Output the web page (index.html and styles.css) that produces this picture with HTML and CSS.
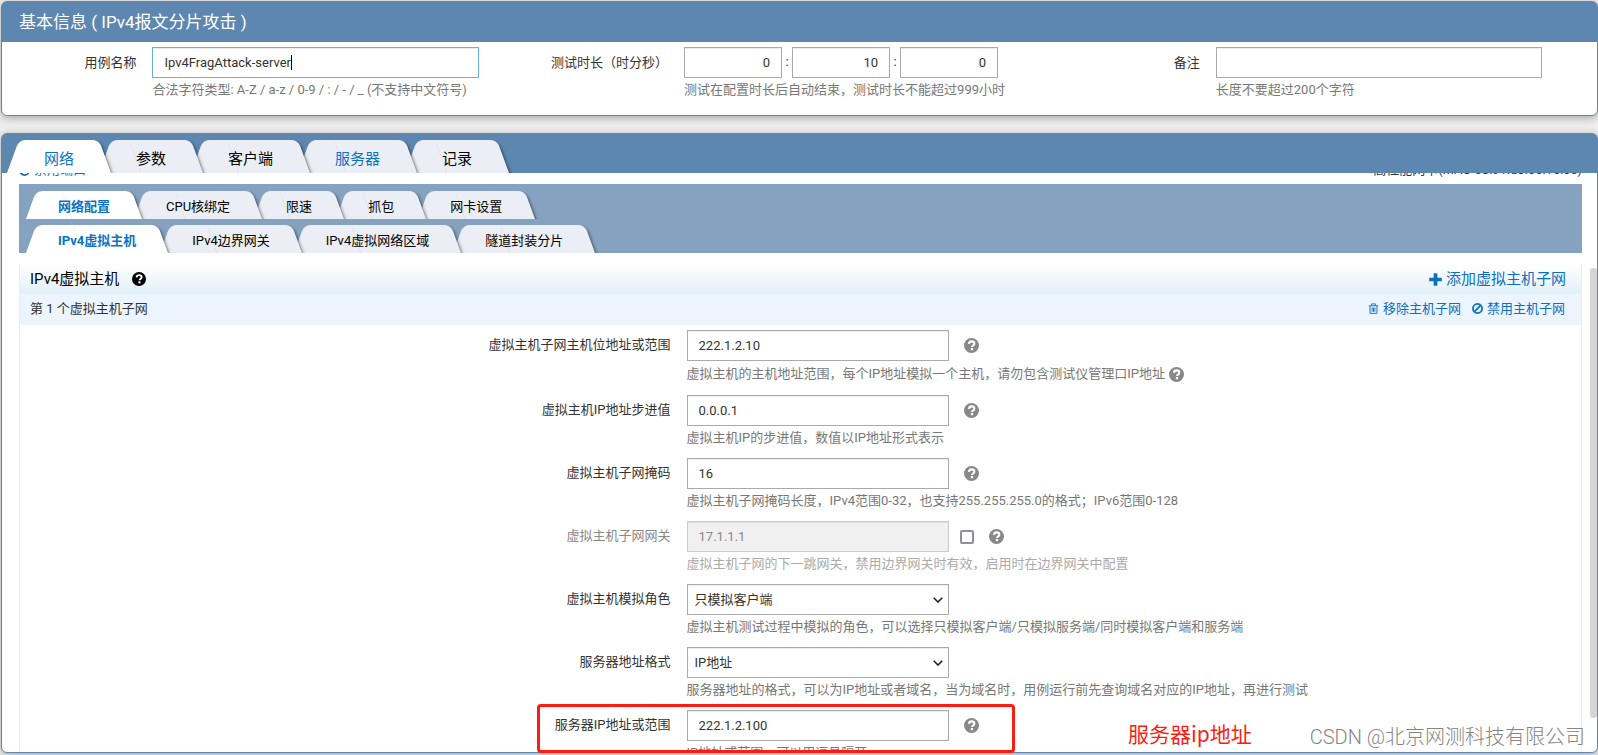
FILE: index.html
```html
<!DOCTYPE html>
<html lang="zh-CN">
<head>
<meta charset="utf-8">
<title>IPv4报文分片攻击</title>
<link rel="stylesheet" href="styles.css">
</head>
<body>
<svg class="defs" aria-hidden="true">
  <symbol id="i-help" viewBox="0 0 16 16"><circle cx="8" cy="8" r="8" fill="currentColor"/><path d="M5.2 6.2C5.4 4.5 6.500 3.600 8.100 3.600c1.700 0 2.900 1 2.900 2.400 0 1.900-2.400 2-2.400 3.500" fill="none" stroke="#fff" stroke-width="2.200"/><rect x="7.300" y="10.600" width="2.400" height="2.400" fill="#fff"/></symbol>
  <symbol id="i-plus" viewBox="0 0 12 12"><path d="M4.300 .2h3.400v4.100h4.100v3.400h-4.100v4.100h-3.400v-4.100h-4.100v-3.400h4.100z" fill="currentColor"/></symbol>
  <symbol id="i-trash" viewBox="0 0 12 12"><path d="M1 3h10M4 3V1h4v2M2.200 3v8.300h7.600V3M4.500 5v4.500M6 5v4.500M7.500 5v4.500" fill="none" stroke="currentColor"/></symbol>
  <symbol id="i-ban" viewBox="0 0 12 12"><circle cx="6" cy="6" r="5" fill="none" stroke="currentColor" stroke-width="1.900"/><path d="M9.300 2.700L2.700 9.300" stroke="currentColor" stroke-width="1.900"/></symbol>
</svg>

<section class="card">
  <h1 class="card-title">基本信息 ( IPv4报文分片攻击 )</h1>
  <form class="basic">
    <div class="field">
      <label class="field-label" for="name">用例名称</label>
      <div class="field-main">
        <span class="name-wrap"><input id="name" class="input focused" type="text" value="Ipv4FragAttack-server"><i class="caret"></i></span>
        <p class="hint">合法字符类型: A-Z / a-z / 0-9 / : / - / _ (不支持中文符号)</p>
      </div>
    </div>
    <div class="field">
      <label class="field-label" for="hours">测试时长（时分秒）</label>
      <div class="field-main">
        <div class="duration">
          <input id="hours" class="input num" type="text" value="0"><span>:</span>
          <input class="input num" type="text" value="10" aria-label="分"><span>:</span>
          <input class="input num" type="text" value="0" aria-label="秒">
        </div>
        <p class="hint">测试在配置时长后自动结束，测试时长不能超过999小时</p>
      </div>
    </div>
    <div class="field">
      <label class="field-label" for="remark">备注</label>
      <div class="field-main">
        <input id="remark" class="input" type="text">
        <p class="hint">长度不要超过200个字符</p>
      </div>
    </div>
  </form>
</section>

<section class="card card-main">
  <nav class="tabs tabs-top">
    <button class="tab active">网络</button>
    <button class="tab">参数</button>
    <button class="tab">客户端</button>
    <button class="tab linked">服务器</button>
    <button class="tab">记录</button>
  </nav>
  <div class="scroll">
    <div class="port-line">
      <a class="link" href="#"><svg class="icon icon-s"><use href="#i-ban"/></svg>禁用端口</a>
      <span>高性能网卡(MAC-68:91:d0:66:16:c6)</span>
    </div>
    <div class="subtabs">
      <nav class="tabs tabs-sub">
        <button class="tab active">网络配置</button>
        <button class="tab">CPU核绑定</button>
        <button class="tab">限速</button>
        <button class="tab">抓包</button>
        <button class="tab">网卡设置</button>
      </nav>
      <nav class="tabs tabs-sub">
        <button class="tab active">IPv4虚拟主机</button>
        <button class="tab">IPv4边界网关</button>
        <button class="tab">IPv4虚拟网络区域</button>
        <button class="tab">隧道封装分片</button>
      </nav>
    </div>

    <section class="hosts">
      <header class="hosts-head">
        <h2>IPv4虚拟主机</h2>
        <svg class="icon icon-h"><use href="#i-help"/></svg>
        <a class="link push" href="#"><svg class="icon icon-p"><use href="#i-plus"/></svg>添加虚拟主机子网</a>
      </header>
      <div class="subnet-bar">
        <span>第 1 个虚拟主机子网</span>
        <a class="link push" href="#"><svg class="icon icon-s"><use href="#i-trash"/></svg>移除主机子网</a>
        <a class="link" href="#"><svg class="icon icon-s"><use href="#i-ban"/></svg>禁用主机子网</a>
      </div>
      <form class="rows">
        <div class="row">
          <label class="row-label" for="f1">虚拟主机子网主机位地址或范围</label>
          <div class="row-main">
            <div class="control"><input id="f1" class="input" type="text" value="222.1.2.10"><svg class="icon icon-q"><use href="#i-help"/></svg></div>
            <p class="hint tall">虚拟主机的主机地址范围，每个IP地址模拟一个主机，请勿包含测试仪管理口IP地址<svg class="icon icon-q"><use href="#i-help"/></svg></p>
          </div>
        </div>
        <div class="row">
          <label class="row-label" for="f2">虚拟主机IP地址步进值</label>
          <div class="row-main">
            <div class="control"><input id="f2" class="input" type="text" value="0.0.0.1"><svg class="icon icon-q"><use href="#i-help"/></svg></div>
            <p class="hint">虚拟主机IP的步进值，数值以IP地址形式表示</p>
          </div>
        </div>
        <div class="row">
          <label class="row-label" for="f3">虚拟主机子网掩码</label>
          <div class="row-main">
            <div class="control"><input id="f3" class="input" type="text" value="16"><svg class="icon icon-q"><use href="#i-help"/></svg></div>
            <p class="hint">虚拟主机子网掩码长度，IPv4范围0-32，也支持255.255.255.0的格式；IPv6范围0-128</p>
          </div>
        </div>
        <div class="row disabled">
          <label class="row-label" for="f4">虚拟主机子网网关</label>
          <div class="row-main">
            <div class="control"><input id="f4" class="input" type="text" value="17.1.1.1" disabled><input class="check" type="checkbox" aria-label="启用虚拟主机子网网关"><svg class="icon icon-q"><use href="#i-help"/></svg></div>
            <p class="hint">虚拟主机子网的下一跳网关，禁用边界网关时有效，启用时在边界网关中配置</p>
          </div>
        </div>
        <div class="row">
          <label class="row-label" for="f5">虚拟主机模拟角色</label>
          <div class="row-main">
            <div class="control"><span class="select-wrap"><select id="f5" class="input select"><option>只模拟客户端</option></select><svg class="chevron" viewBox="0 0 10 6"><path d="M.7 .7L5 5 9.300 .7" fill="none" stroke="#222" stroke-width="1.600"/></svg></span></div>
            <p class="hint">虚拟主机测试过程中模拟的角色，可以选择只模拟客户端/只模拟服务端/同时模拟客户端和服务端</p>
          </div>
        </div>
        <div class="row">
          <label class="row-label" for="f6">服务器地址格式</label>
          <div class="row-main">
            <div class="control"><span class="select-wrap"><select id="f6" class="input select"><option>IP地址</option></select><svg class="chevron" viewBox="0 0 10 6"><path d="M.7 .7L5 5 9.300 .7" fill="none" stroke="#222" stroke-width="1.600"/></svg></span></div>
            <p class="hint">服务器地址的格式，可以为IP地址或者域名，当为域名时，用例运行前先查询域名对应的IP地址，再进行测试</p>
          </div>
        </div>
        <div class="row">
          <label class="row-label" for="f7">服务器IP地址或范围</label>
          <div class="row-main">
            <div class="control"><input id="f7" class="input" type="text" value="222.1.2.100"><svg class="icon icon-q"><use href="#i-help"/></svg></div>
            <p class="hint">IP地址或范围，可以用逗号隔开</p>
          </div>
        </div>
      </form>
    </section>
  </div>
  <div class="thumb"></div>
</section>

<div class="mark-box"></div>
<div class="mark-text">服务器ip地址</div>
<div class="watermark">CSDN @北京网测科技有限公司</div>
</body>
</html>
```
FILE: styles.css
```css
* { box-sizing: border-box; }

body {
  margin: 0;
  height: 100vh;
  padding: 1px 0 2px 1px;
  display: flex;
  flex-direction: column;
  gap: 17px;
  position: relative;
  overflow: hidden;
  background: #eee;
  color: #333;
  font: 13px/20px Roboto, "Noto Sans CJK SC", sans-serif;
}

h1, h2, p { margin: 0; font-weight: 400; }
input, select, button { font: inherit; color: inherit; }
.defs { display: none; }

.card {
  background: #fff;
  border: 1px solid #5d87b0;
  border-radius: 6px;
  box-shadow: 0 2px 8px rgba(0, 0, 0, .3);
}
.card-title {
  padding: 0 17px;
  background: #5d87b0;
  border-radius: 4px 4px 0 0;
  color: #fff;
  font-size: 17px;
  line-height: 40px;
}

.basic {
  display: grid;
  grid-template-columns: repeat(3, 1fr);
  padding: 5px 0 15px;
}
.field { display: flex; }
.field-label {
  width: 28.3%;
  padding-right: 16px;
  text-align: right;
  line-height: 31px;
}
.field-main { width: 61.4%; }

.input {
  display: block;
  width: 100%;
  height: 31px;
  padding: 0 11px;
  border: 1px solid #aaa;
  border-radius: 0;
  outline: 0;
  background: #fff;
  box-shadow: inset 0 1px 1px rgba(0, 0, 0, .08);
}
.focused { border-color: #66afe9; }
.name-wrap { display: block; position: relative; }
.caret {
  position: absolute;
  left: 139px;
  top: 8px;
  width: 1px;
  height: 15px;
  background: #000;
}
.duration { display: flex; }
.duration span { width: 10px; text-align: center; line-height: 30px; }
.num { width: 98px; text-align: right; }

.hint { margin-top: 2px; color: #777; white-space: nowrap; }

.card-main {
  flex: 1;
  min-height: 0;
  display: flex;
  flex-direction: column;
  position: relative;
}

.tabs { display: flex; overflow: hidden; }
.tabs-top {
  padding: 6px 5px 0;
  background: #5d87b0;
  border-radius: 4px 4px 0 0;
  font-size: 15px;
}
.tab {
  position: relative;
  z-index: 1;
  height: 33px;
  margin: 0 -12px 0 0;
  padding: 4px 37px 0;
  border: 0;
  background: none;
  color: #000;
  white-space: nowrap;
  isolation: isolate;
}
.tab::before,
.tab::after {
  content: "";
  position: absolute;
  z-index: -1;
  top: 0;
  bottom: 0;
  background: #ebeef4;
}
.tab::before {
  left: 0;
  right: 40%;
  border-radius: 6px 0 0 0;
  transform: skewX(-20deg);
  transform-origin: 0 100%;
}
.tab::after {
  left: 40%;
  right: 0;
  border-radius: 0 6px 0 0;
  transform: skewX(20deg);
  transform-origin: 100% 100%;
  box-shadow: 1px 2px 3px rgba(0, 0, 0, .5);
  clip-path: inset(0 -8px 0 0);
}
.tab:nth-child(1) { z-index: 5; }
.tab:nth-child(2) { z-index: 4; }
.tab:nth-child(3) { z-index: 3; }
.tab:nth-child(4) { z-index: 2; }
.tab.active, .tab.linked { color: #0b72c4; }
.tab.active::before, .tab.active::after { background: #fff; }

.scroll {
  flex: 1;
  min-height: 0;
  overflow: hidden;
  padding: 0 15px 0 17px;
}
.port-line {
  display: flex;
  justify-content: space-between;
  margin-top: -13px;
  padding-bottom: 4px;
}
.link {
  display: inline-flex;
  align-items: center;
  gap: 4px;
  color: #0b6fc2;
  text-decoration: none;
}
.push { margin-left: auto; }
.icon { flex: none; width: 15px; height: 15px; }
.icon-s { width: 11px; height: 11px; }
.icon-p { width: 13px; height: 13px; }
.icon-h { width: 14px; height: 14px; margin-left: 13px; }
.icon-q { color: #888; }

.subtabs {
  display: flex;
  flex-direction: column;
  gap: 6px;
  padding: 7px 7px 0;
  background: #86a2c1;
}
.tabs-sub .tab { height: 28px; margin-right: -8px; padding: 3px 32px 0; }
.tabs-sub .active { font-weight: 700; }

.hosts { margin-top: 11px; border: solid #e2eef8; border-width: 0 1px; }
.hosts-head {
  display: flex;
  align-items: center;
  height: 30px;
  padding: 0 15px 0 10px;
  background: linear-gradient(#fff, #e1f0f8);
  color: #000;
  font-size: 15px;
}
.hosts-head h2 { font-size: 15px; }
.subnet-bar {
  display: flex;
  align-items: center;
  gap: 11px;
  height: 31px;
  padding: 0 16px 2px 10px;
  background: #ecf4fe;
}

.rows { display: flex; flex-direction: column; gap: 10px; padding-top: 5px; }
.row { display: flex; }
.row-label {
  flex: 0 0 42.7%;
  padding-right: 16px;
  text-align: right;
  line-height: 30px;
}
.control { display: flex; align-items: center; }
.control .input { width: 262px; }
.control .icon { margin-left: 15px; }
.hint.tall { display: flex; align-items: center; gap: 4px; height: 22px; }
.select-wrap { position: relative; }
.control .select { appearance: none; padding: 0 7px; }
.chevron { position: absolute; right: 6px; top: 13px; width: 10px; height: 6px; }
.check {
  appearance: none;
  width: 14px;
  height: 14px;
  margin: 0 0 0 11px;
  border: 2px solid #8f8f9d;
  border-radius: 2px;
  background: #fff;
}
.disabled .row-label { color: #888; }
.disabled .hint { color: #aaa; }
.disabled .input { background: #f0f0f0; border-color: #ccc; color: #888; }

.thumb {
  position: absolute;
  right: 0;
  top: 134px;
  width: 7px;
  height: 450px;
  border-radius: 3px;
  background: #d5d5d5;
}

.mark-box {
  position: absolute;
  left: 537px;
  top: 704px;
  width: 478px;
  height: 49px;
  border: 3px solid #fb1d13;
  border-radius: 4px;
}
.mark-text {
  position: absolute;
  left: 1128px;
  top: 719px;
  color: #fb1d13;
  font: 21px/28px "Noto Sans CJK SC", sans-serif;
}
.watermark {
  position: absolute;
  right: 13px;
  bottom: 4px;
  color: #858585;
  font: 300 20px/28px Roboto, "Noto Sans CJK SC", sans-serif;
}
```
